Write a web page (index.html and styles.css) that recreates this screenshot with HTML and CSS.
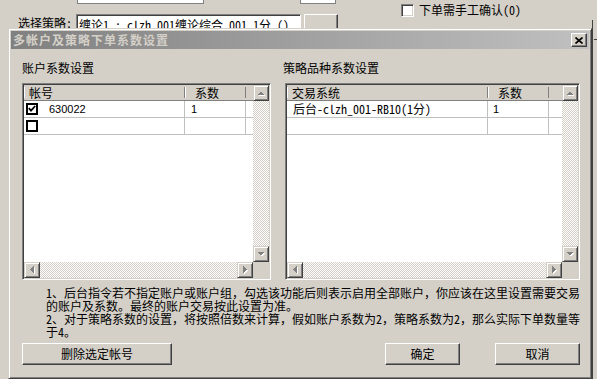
FILE: index.html
```html
<!DOCTYPE html>
<html lang="zh-CN">
  <head>
    <meta charset="UTF-8" />
    <title>多帐户及策略下单系数设置</title>
    <link rel="stylesheet" href="styles.css">
  </head>
  <body>
    <div class="desktop">
      <!-- parent window behind the dialog -->
      <div class="parent-top">
        <div class="strategy-label">选择策略:</div>
        <div class="col-a">
          <div class="field field-a"></div>
          <div class="combo">缠论1 : clzh_001缠论综合_001_1分 ()</div>
        </div>
        <div class="col-b">
          <div class="field field-b"></div>
          <div class="small-btn"></div>
        </div>
        <div class="manual-confirm">
          <span class="sunken-check"></span>
          <span>下单需手工确认(0)</span>
        </div>
      </div>
      <div class="parent-edge"><div class="parent-tick"></div></div>

      <div class="dialog">
        <div class="titlebar">
          <span class="title">多帐户及策略下单系数设置</span>
          <span class="close-btn">
            <svg width="8" height="7" viewBox="0 0 8 7"><path d="M0.5 0.5 L7.5 6.5 M7.5 0.5 L0.5 6.5" stroke="#000" stroke-width="1.7" fill="none"/></svg>
          </span>
        </div>

        <div class="client">
          <div class="groups">
            <section class="group group-left">
              <h3>账户系数设置</h3>
              <div class="listbox">
                <div class="grid-area">
                  <div class="head-row">
                    <div class="hcell c1 acc-c1">帐号</div>
                    <div class="hcell c2">系数</div>
                    <div class="hcell c3"></div>
                  </div>
                  <div class="row">
                    <div class="cell c1 acc-c1">
                      <span class="flat-check">
                        <svg width="8" height="8" viewBox="0 0 8 8"><polyline points="0.8,3.2 3,5.6 7.2,1" stroke="#000" stroke-width="1.8" fill="none"/></svg>
                      </span>
                      <span class="num acc-no">630022</span>
                    </div>
                    <div class="cell c2"><span class="num">1</span></div>
                    <div class="cell c3"></div>
                  </div>
                  <div class="row">
                    <div class="cell c1 acc-c1"><span class="flat-check"></span></div>
                    <div class="cell c2"></div>
                    <div class="cell c3"></div>
                  </div>
                </div>
                <div class="vscroll">
                  <div class="sbtn"><svg width="8" height="5" viewBox="0 0 8 5"><polygon points="1,5 4.5,1.5 8,5" fill="#fff"/><polygon points="0,4 3.5,0.5 7,4" fill="#808080"/></svg></div>
                  <div class="track"></div>
                  <div class="sbtn"><svg width="8" height="5" viewBox="0 0 8 5"><polygon points="1,1 8,1 4.5,4.5" fill="#fff"/><polygon points="0,0 7,0 3.5,3.5" fill="#808080"/></svg></div>
                </div>
                <div class="hscroll">
                  <div class="sbtn"><svg width="5" height="8" viewBox="0 0 5 8"><polygon points="4.5,1 4.5,8 1,4.5" fill="#fff"/><polygon points="3.5,0 3.5,7 0,3.5" fill="#808080"/></svg></div>
                  <div class="track"></div>
                  <div class="sbtn"><svg width="5" height="8" viewBox="0 0 5 8"><polygon points="1,1 1,8 4.5,4.5" fill="#fff"/><polygon points="0,0 0,7 3.5,3.5" fill="#808080"/></svg></div>
                </div>
                <div class="corner"></div>
              </div>
            </section>

            <section class="group group-right">
              <h3 class="shift">策略品种系数设置</h3>
              <div class="listbox">
                <div class="grid-area">
                  <div class="head-row">
                    <div class="hcell c1 sys-c1">交易系统</div>
                    <div class="hcell c2">系数</div>
                    <div class="hcell c3"></div>
                  </div>
                  <div class="row">
                    <div class="cell c1 sys-c1"><span class="sys-name">后台-clzh_001-RB10(1分)</span></div>
                    <div class="cell c2 sys-c2"><span class="num">1</span></div>
                    <div class="cell c3"></div>
                  </div>
                  <div class="row">
                    <div class="cell c1 sys-c1"></div>
                    <div class="cell c2"></div>
                    <div class="cell c3"></div>
                  </div>
                </div>
                <div class="vscroll">
                  <div class="sbtn"><svg width="8" height="5" viewBox="0 0 8 5"><polygon points="1,5 4.5,1.5 8,5" fill="#fff"/><polygon points="0,4 3.5,0.5 7,4" fill="#808080"/></svg></div>
                  <div class="track"></div>
                  <div class="sbtn"><svg width="8" height="5" viewBox="0 0 8 5"><polygon points="1,1 8,1 4.5,4.5" fill="#fff"/><polygon points="0,0 7,0 3.5,3.5" fill="#808080"/></svg></div>
                </div>
                <div class="hscroll">
                  <div class="sbtn"><svg width="5" height="8" viewBox="0 0 5 8"><polygon points="4.5,1 4.5,8 1,4.5" fill="#fff"/><polygon points="3.5,0 3.5,7 0,3.5" fill="#808080"/></svg></div>
                  <div class="track"></div>
                  <div class="sbtn"><svg width="5" height="8" viewBox="0 0 5 8"><polygon points="1,1 1,8 4.5,4.5" fill="#fff"/><polygon points="0,0 0,7 3.5,3.5" fill="#808080"/></svg></div>
                </div>
                <div class="corner"></div>
              </div>
            </section>
          </div>

          <p class="note">1、后台指令若不指定账户或账户组，勾选该功能后则表示启用全部账户，你应该在这里设置需要交易<br>的账户及系数。最终的账户交易按此设置为准。<br>2、对于策略系数的设置，将按照倍数来计算，假如账户系数为2，策略系数为2，那么实际下单数量等<br>于4。</p>

          <div class="buttons">
            <div class="btn del-btn">删除选定帐号</div>
            <div class="btn ok-btn">确定</div>
            <div class="btn cancel-btn">取消</div>
          </div>
        </div>
      </div>
    </div>
  </body>
</html>
```

FILE: styles.css
```css
* {
  box-sizing: border-box;
}

body {
  margin: 0;
  background-color: #d4d0c8;
  font-family: "Noto Sans Mono CJK SC", "Noto Sans CJK SC", sans-serif;
  font-size: 12px;
  color: #000;
  overflow: hidden;
}

.desktop {
  position: relative;
  width: 597px;
  height: 379px;
}

/* parent window */
.parent-top {
  display: flex;
  align-items: flex-start;
  padding-left: 18px;
}

.strategy-label {
  width: 58px;
  margin-top: 16px;
  line-height: 14px;
  white-space: nowrap;
}

.col-a {
  width: 225px;
}

.field {
  height: 4px;
  background-color: #fff;
  border: 1px solid #808080;
  border-top: none;
}

.field-a {
  margin-left: 1px;
  width: 127px;
}

.combo {
  margin-top: 10px;
  height: 20px;
  background-color: #fff;
  border: 1px solid;
  border-color: #808080 #fff #fff #808080;
  box-shadow: inset 1px 1px #404040;
  padding: 3px 0 0 2px;
  line-height: 14px;
  white-space: nowrap;
  overflow: hidden;
}

.col-b {
  width: 38px;
  margin-left: -1px;
}

.field-b {
  width: 36px;
}

.small-btn {
  margin: 10px 0 0 4px;
  width: 34px;
  height: 20px;
  background-color: #d4d0c8;
  border: 1px solid;
  border-color: #fff #404040 #404040 #fff;
  box-shadow: inset -1px -1px #808080;
}

.manual-confirm {
  display: flex;
  align-items: center;
  gap: 5px;
  margin: 3px 0 0 63px;
  line-height: 14px;
  white-space: nowrap;
}

.sunken-check {
  width: 13px;
  height: 13px;
  background-color: #fff;
  border: 1px solid;
  border-color: #808080 #fff #fff #808080;
  box-shadow: inset 1px 1px #404040, inset -1px -1px #d4d0c8;
}

.parent-edge {
  position: absolute;
  left: 592px;
  top: 20px;
  width: 5px;
  height: 359px;
  border-left: 1px solid #404040;
  padding-top: 19px;
}

.parent-tick {
  height: 1px;
  margin-left: 1px;
  background-color: #404040;
}

/* dialog window */
.dialog {
  position: absolute;
  left: 8px;
  top: 28px;
  width: 584px;
  height: 351px;
  background-color: #d4d0c8;
  border: 1px solid;
  border-color: #d4d0c8 #404040 #404040 #d4d0c8;
  box-shadow: inset 1px 1px #fff, inset -1px -1px #808080;
  padding: 2px;
  display: flex;
  flex-direction: column;
}

.titlebar {
  height: 18px;
  display: flex;
  align-items: center;
  padding-left: 2px;
  background: linear-gradient(to right, #808080, #c0c0c0);
}

.title {
  color: #d4d0c8;
  font-family: "Noto Sans CJK SC", sans-serif;
  font-weight: bold;
  letter-spacing: 1px;
  line-height: 14px;
}

.close-btn {
  margin-left: auto;
  margin-right: 2px;
  width: 16px;
  height: 14px;
  display: flex;
  align-items: center;
  justify-content: center;
  background-color: #d4d0c8;
  border: 1px solid;
  border-color: #fff #404040 #404040 #fff;
  box-shadow: inset -1px -1px #808080;
}

.client {
  flex: 1;
  padding: 12px 9px 0 11px;
}

.groups {
  display: flex;
  gap: 14px;
}

.group-left {
  width: 249px;
}

.group-right {
  width: 295px;
}

.group h3 {
  margin: 0 0 8px;
  font-size: 12px;
  font-weight: normal;
  line-height: 14px;
}

.group h3.shift {
  margin-left: -2px;
}

/* list view */
.listbox {
  height: 197px;
  background-color: #fff;
  border: 1px solid;
  border-color: #808080 #fff #fff #808080;
  box-shadow: inset 1px 1px #404040, inset -1px -1px #d4d0c8;
  padding: 1px;
  display: grid;
  grid-template-columns: 1fr 16px;
  grid-template-rows: 1fr 16px;
}

.grid-area {
  overflow: hidden;
}

.head-row {
  display: flex;
  height: 16px;
  background-color: #d4d0c8;
  border-bottom: 1px solid #808080;
}

.hcell {
  line-height: 15px;
  white-space: nowrap;
}

.hcell.c1,
.hcell.c2 {
  background:
    linear-gradient(#808080, #808080) right center / 1px 11px no-repeat,
    linear-gradient(#fff, #fff) left center / 1px 11px no-repeat;
}

.hcell.c1 {
  padding-left: 5px;
}

.hcell.c2 {
  padding-left: 10px;
}

.c1 {
  flex: none;
}

.c2 {
  flex: none;
  width: 61px;
}

.c3 {
  flex: 1;
}

.acc-c1 {
  width: 161px;
}

.sys-c1 {
  width: 201px;
}

.row {
  display: flex;
  height: 17px;
  border-bottom: 1px solid #c0c0c0;
}

.cell {
  display: flex;
  align-items: flex-start;
  line-height: 16px;
  white-space: nowrap;
}

.cell.c1,
.cell.c2 {
  border-right: 1px solid #c0c0c0;
}

.cell.c2 {
  padding-left: 6px;
}

.cell.sys-c2 {
  padding-left: 5px;
}

.flat-check {
  width: 12px;
  height: 12px;
  margin: 2px 0 0 2px;
  border: 2px solid #000;
  background-color: #fff;
  display: flex;
  align-items: center;
  justify-content: center;
}

.num {
  font-family: "Liberation Sans", sans-serif;
  font-size: 11px;
}

.acc-no {
  margin-left: 11px;
}

.sys-name {
  padding-left: 6px;
}

/* scrollbars */
.vscroll {
  display: flex;
  flex-direction: column;
}

.hscroll {
  display: flex;
}

.sbtn {
  flex: none;
  width: 16px;
  height: 16px;
  display: flex;
  align-items: center;
  justify-content: center;
  background-color: #d4d0c8;
  border: 1px solid;
  border-color: #d4d0c8 #404040 #404040 #d4d0c8;
  box-shadow: inset 1px 1px #fff, inset -1px -1px #808080;
}

.sbtn svg {
  shape-rendering: crispEdges;
}

.track {
  flex: 1;
  background: conic-gradient(#fff 0 25%, #d4d0c8 0 50%, #fff 0 75%, #d4d0c8 0) 0 0 / 2px 2px;
}

.corner {
  background-color: #d4d0c8;
}

/* note and buttons */
.note {
  margin: 6px 0 0 24px;
  line-height: 13px;
  white-space: nowrap;
}

.buttons {
  display: flex;
  margin-top: 5px;
}

.btn {
  height: 22px;
  line-height: 20px;
  text-align: center;
  background-color: #d4d0c8;
  border: 1px solid;
  border-color: #fff #404040 #404040 #fff;
  box-shadow: inset -1px -1px #808080;
}

.del-btn {
  width: 150px;
}

.ok-btn {
  width: 75px;
  margin-left: auto;
}

.cancel-btn {
  width: 85px;
  margin-left: 35px;
}
```
